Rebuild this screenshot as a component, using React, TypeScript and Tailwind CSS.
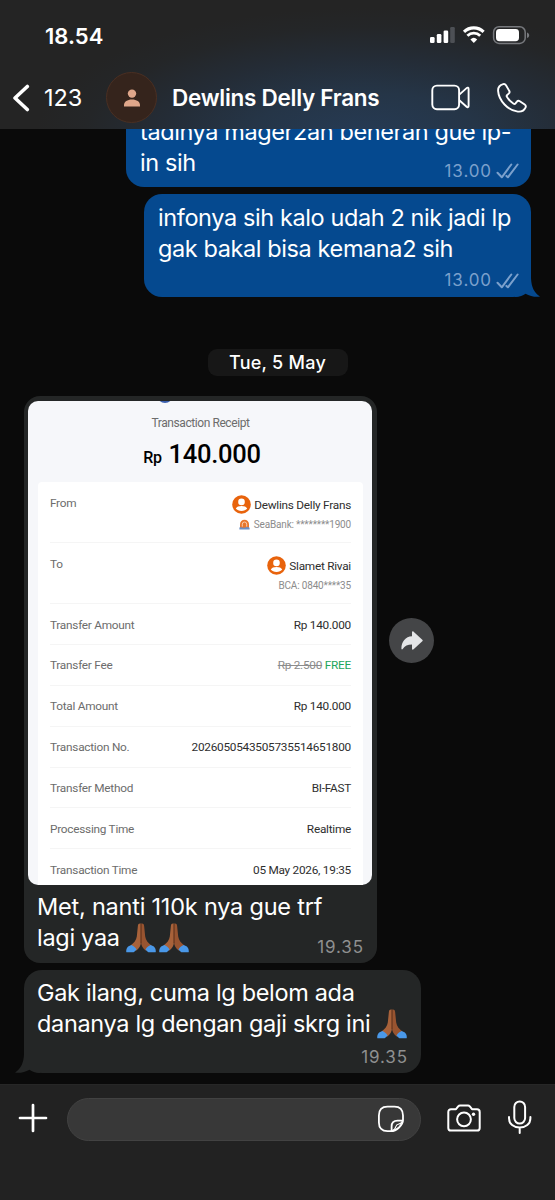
import type { ReactNode } from 'react';

const SANS = "font-['Inter','Liberation_Sans',sans-serif]";

const StatusIcons = () => (
  <svg width="102" height="20" viewBox="0 0 102 20" fill="none">
    <rect x="2" y="12" width="4.6" height="6" rx="1.3" fill="#fff" />
    <rect x="8.8" y="9" width="4.6" height="9" rx="1.3" fill="#fff" />
    <rect x="15.6" y="5.5" width="4.6" height="12.5" rx="1.3" fill="#fff" />
    <rect x="22.2" y="2" width="4.6" height="16" rx="1.3" fill="#4d5055" />
    <path d="M36 6.9a14 14 0 0 1 19.6 0" stroke="#fff" strokeWidth="3.1" />
    <path d="M39.4 10.7a9.2 9.2 0 0 1 12.8 0" stroke="#fff" strokeWidth="2.9" />
    <path d="M45.8 18l-3.4-3.6a5 5 0 0 1 6.8 0z" fill="#fff" />
    <rect x="65.6" y="1.8" width="31.6" height="16.6" rx="5.4" stroke="#77797d" strokeWidth="1.5" />
    <rect x="68" y="4" width="23" height="12.2" rx="3.4" fill="#fff" />
    <path d="M99 7.4c1.6.5 2.2 1.6 2.2 2.8s-.6 2.3-2.2 2.8z" fill="#77797d" />
  </svg>
);

const Header = () => (
  <header className="relative z-10 flex h-[129px] shrink-0 flex-col bg-[#242424] bg-[radial-gradient(ellipse_330px_130px_at_365px_138px,#263b55_0%,#253547_35%,#242c36_62%,#242628_85%,#242424_100%)]">
    <div className="flex h-[67px] items-start justify-between pt-[25px] pr-[25px] pl-[45px]">
      <span className="text-[22px] leading-[22px] font-semibold tracking-[0.05px]">18.54</span>
      <StatusIcons />
    </div>
    <div className="flex h-[62px] items-center pb-px">
      <svg className="ml-[12px]" width="18" height="28" viewBox="0 0 18 28" fill="none">
        <path d="M15.3 2.5L3 14l12.3 11.5" stroke="#fff" strokeWidth="3.6" strokeLinecap="round" strokeLinejoin="round" />
      </svg>
      <span className="ml-[14px] w-[62px] pt-px text-[23.5px] tracking-[-0.1px]">123</span>
      <div className="flex size-[51px] items-center justify-center rounded-full border border-[#4a2f22] bg-[#35241c]">
        <svg width="18" height="18" viewBox="0 0 18 18" fill="#dfa68a">
          <circle cx="9" cy="4.6" r="4.2" />
          <path d="M1 17.6v-1.4c0-3.4 3.4-5.6 8-5.6s8 2.2 8 5.6v1.4z" />
        </svg>
      </div>
      <span className="ml-[15px] w-[259px] pt-px text-[22.5px] font-semibold tracking-[-0.27px] whitespace-nowrap">Dewlins Delly Frans</span>
      <svg width="40" height="27" viewBox="0 0 40 27" fill="none" stroke="#fff" strokeWidth="1.9" strokeLinejoin="round">
        <rect x="1.3" y="1.6" width="26.8" height="23.6" rx="4.6" />
        <path d="M28.3 10.6l7.3-6.5c1-.9 2-.4 2 .8v17c0 1.2-1 1.7-2 .8l-7.3-6.5" />
      </svg>
      <svg className="ml-[25px]" width="32" height="32" viewBox="0 0 32 32" fill="none" stroke="#fff" strokeWidth="1.9" strokeLinejoin="round">
        <path d="M7.2 2.2C4.2 3 1.9 5.4 2.1 8.9c.6 9.6 10 19.7 19.7 20.7 3.7.4 6.6-1.5 7.8-4.2.5-1.2.1-2.2-.9-2.9l-4.9-3.300c-1-.6-2.200-.4-2.900.5l-1.400 1.700c-.5.6-1.200.7-1.900.3-2.800-1.700-5-4-6.700-6.900-.4-.7-.3-1.400.3-1.900l1.500-1.300c.9-.8 1.100-2 .4-3L10 3.200c-.7-1-1.700-1.300-2.800-1z" />
      </svg>
    </div>
  </header>
);

const Ticks = () => (
  <svg width="23" height="16" viewBox="0 0 23 16" fill="none" stroke="#7ba0cc" strokeWidth="2" strokeLinecap="round" strokeLinejoin="round">
    <path d="M1.5 9.8l4.300 4.500L15.300 1.500" />
    <path d="M10.400 12.900l1.500 1.400L21.600 1.500" />
  </svg>
);

const Time = ({ value, sent = false }: { value: string; sent?: boolean }) => (
  <div className={`flex h-5 items-center justify-end gap-1 text-[17px] tracking-[0.9px] ${sent ? 'text-[#7ba0cc]' : 'text-[#8f9090]'}`}>
    <span>{value}</span>
    {sent && <Ticks />}
  </div>
);

const Line = ({ children, className = 'tracking-[-0.4px]' }: { children: ReactNode; className?: string }) => (
  <p className={`h-[31.3px] text-[23.5px] leading-[31.3px] whitespace-nowrap ${className}`}>{children}</p>
);

// folded hands, medium-dark skin tone, blue cuffs
const Pray = () => (
  <svg className="mr-[3px] inline-block align-[-7px]" width="30" height="30" viewBox="0 0 30 30">
    <path d="M14.9.8c-1.500-.8-2.800.2-3 2L10.800 13.500C10.300 17 8 20 4.500 22.500l5.500 5.200c3-2 4.900-5 4.900-8.500z" fill="#a8623a" />
    <path d="M15.100.8c1.500-.8 2.800.2 3 2l1.100 10.700c.5 3.500 2.800 6.500 6.300 9L20 27.700c-3-2-4.900-5-4.900-8.500z" fill="#985430" />
    <path d="M15 1v19" stroke="#5f2f18" strokeWidth=".9" />
    <path d="M5.300 22c2 .6 4.200 2.400 5.200 4.600-.8 1.100-1.700 2-2.900 2.700H.4c-.6-2 .3-4.400 1.700-5.800z" fill="#4a98e8" />
    <path d="M24.700 22c-2 .6-4.200 2.400-5.200 4.600.8 1.100 1.700 2 2.900 2.700h7.200c.6-2-.3-4.400-1.700-5.800z" fill="#4a98e8" />
  </svg>
);

const UserBadge = () => (
  <svg width="19" height="19" viewBox="0 0 19 19">
    <circle cx="9.5" cy="9.5" r="9.3" fill="#e8630c" />
    <circle cx="9.5" cy="6.9" r="3.3" fill="#fff" />
    <path d="M3.8 13.600c.8-1.700 3-2.500 5.700-2.500s4.900.8 5.700 2.500c-1.200 1.600-3.300 2.500-5.700 2.500s-4.500-.9-5.700-2.500z" fill="#fff" />
  </svg>
);

const SeaBankLogo = () => (
  <svg width="11" height="11" viewBox="0 0 11 11">
    <path d="M1 9V5.200a4.500 4.500 0 0 1 9 0V9z" fill="#e8762c" />
    <path d="M3.300 7.600V5.200a2.200 2.200 0 0 1 4.400 0v2.400" fill="none" stroke="#f8d9bf" strokeWidth=".9" />
    <path d="M.4 8.600c1.700-1.300 3.200.6 5 .1 1.700-.5 3.500-1 5.200 0v1.900H.4z" fill="#6b8fc4" />
  </svg>
);

const rows = [
  ['Transfer Amount', 'Rp 140.000'],
  ['Transfer Fee', ''],
  ['Total Amount', 'Rp 140.000'],
  ['Transaction No.', '2026050543505735514651800'],
  ['Transfer Method', 'BI-FAST'],
  ['Processing Time', 'Realtime'],
  ['Transaction Time', '05 May 2026, 19:35'],
];

type PartyProps = { label: string; name: string; account: string; logo?: ReactNode };

const Party = ({ label, name, account, logo }: PartyProps) => (
  <div className="flex h-[61px] justify-between border-b border-[#f5f5f5]">
    <span className="pt-[13px] leading-[16px] text-[#6c6c6c]">{label}</span>
    <div className="flex flex-col items-end pt-[13px]">
      <div className="flex h-[19px] items-center gap-[3px]">
        <UserBadge />
        <span className="pt-0.5">{name}</span>
      </div>
      <div className="mt-[3px] flex h-[14px] items-center gap-1 text-[10px] tracking-[-0.17px] text-[#8c8c8c]">
        {logo}
        <span>{account}</span>
      </div>
    </div>
  </div>
);

const Receipt = () => (
  <div className="relative h-[484px] overflow-hidden rounded-[10px] bg-[#f6f7fa] pr-[9px] pl-[10px] font-['Roboto',sans-serif] text-[11.8px] tracking-[-0.25px] text-[#2e2e2e]">
    <div className="absolute -top-[14px] left-[129px] size-4 rounded-full bg-[#3b5fae]" />
    <h2 className="pt-[14px] text-center text-[12px] leading-[16px] tracking-[-0.42px] text-[#6c6c6c]">Transaction Receipt</h2>
    <div className="flex h-[51px] items-baseline justify-center gap-[7px] pt-[7px] pl-[3px] font-medium text-black">
      <span className="text-[16px] tracking-[-0.4px]">Rp</span>
      <span className="text-[25.5px] leading-[32px] tracking-[-0.25px]">140.000</span>
    </div>
    <div className="h-[410px] rounded-t-[4px] bg-white px-[12px]">
      <Party label="From" name="Dewlins Delly Frans" account="SeaBank: ********1900" logo={<SeaBankLogo />} />
      <Party label="To" name="Slamet Rivai" account="BCA: 0840****35" />
      {rows.map(([label, value]) => (
        <div key={label} className="flex h-[40.9px] items-center justify-between border-b border-[#f5f5f5] pt-[3px]">
          <span className="text-[#6c6c6c]">{label}</span>
          <span>
            {value || (
              <>
                <s className="text-[#8c8c8c]">Rp 2.500</s> <span className="text-[#21a65b]">FREE</span>
              </>
            )}
          </span>
        </div>
      ))}
    </div>
  </div>
);

const Chat = () => (
  <main className="flex h-[955px] shrink-0 flex-col overflow-hidden bg-[#0a0a0a]">
    <div className="-mt-[22px] mr-[24px] h-[80px] w-[405px] shrink-0 self-end rounded-[18px] bg-[#05498f] px-[14px] pt-[9px]">
      <Line>tadinya mager2an beneran gue lp-</Line>
      <div className="flex justify-between">
        <Line>in sih</Line>
        <div className="-mr-[2px] pt-[14px]"><Time value="13.00" sent /></div>
      </div>
    </div>

    <div className="relative mt-[7px] mr-[24px] h-[103px] w-[387px] shrink-0 self-end rounded-[18px] bg-[#05498f] px-[14px] pt-[7.5px]">
      <Line>infonya sih kalo udah 2 nik jadi lp</Line>
      <Line>gak bakal bisa kemana2 sih</Line>
      <div className="-mr-[2px] pt-[7px]"><Time value="13.00" sent /></div>
      <svg className="absolute -right-[9px] bottom-0" width="25" height="24" viewBox="0 0 25 24" fill="#05498f">
        <path d="M9 0h7v5c.4 9 3 14.500 9 18.600-5 .8-10-.5-14.500-2.900C8 22.500 5 24 0 24v-5h9z" />
      </svg>
    </div>

    <div className="mt-[52px] flex h-[27px] w-[140px] shrink-0 items-center justify-center self-center rounded-[9px] bg-[#171717] text-[18px] font-medium tracking-[0.25px]">
      Tue, 5 May
    </div>

    <div className="mt-[20px] ml-[24px] flex shrink-0 items-center gap-[12px]">
      <div className="h-[567px] w-[353px] rounded-[16px] bg-[#242626] pt-[5px] pr-[5px] pl-[4px]">
        <Receipt />
        <div className="pr-[8px] pl-[9px] pt-[6px]">
          <Line className="tracking-[-0.22px]">Met, nanti 110k nya gue trf</Line>
          <div className="flex justify-between">
            <Line className="tracking-[-0.3px]">lagi yaa <Pray /><Pray /></Line>
            <div className="pt-[15px]"><Time value="19.35" /></div>
          </div>
        </div>
      </div>
      <button className="-mt-[79px] flex size-[45px] items-center justify-center rounded-full bg-[#444547]" aria-label="Forward">
        <svg width="22" height="19" viewBox="0 0 22 19" fill="#e4e5e7">
          <path d="M11 1.200v4C4.500 5.600.4 10.500.4 17.600c0 1 .9 1.100 1.300.4 2-3.300 5-4.500 9.300-4.500v4.300c0 .9.900 1.200 1.600.5l8.700-8c.6-.6.6-1 0-1.600L12.600.7C11.900 0 11 .3 11 1.200z" />
        </svg>
      </button>
    </div>

    <div className="relative mt-[7px] ml-[24px] h-[103px] w-[397px] shrink-0 rounded-[18px] bg-[#242626] px-[13px] pt-[7px]">
      <Line className="tracking-[-0.33px]">Gak ilang, cuma lg belom ada</Line>
      <Line className="tracking-[-0.33px]">dananya lg dengan gaji skrg ini <Pray /></Line>
      <div className="pt-[8px]"><Time value="19.35" /></div>
      <svg className="absolute bottom-0 -left-[9px]" width="25" height="24" viewBox="0 0 25 24" fill="#242626">
        <path d="M16 0H9v5c-.4 9-3 14.500-9 18.600 5 .8 10-.5 14.500-2.900C17 22.500 20 24 25 24v-5h-9z" />
      </svg>
    </div>
  </main>
);

const Composer = () => (
  <footer className="flex h-[116px] shrink-0 items-start border-t border-[#272727] bg-[#222222] pt-[13px]">
    <svg className="mt-[5px] ml-[18px]" width="30" height="30" viewBox="0 0 30 30" stroke="#fff" strokeWidth="2.7" strokeLinecap="round">
      <path d="M15 2v26M2 15h26" />
    </svg>
    <div className="ml-[19px] flex h-[43px] w-[354px] items-center justify-end rounded-full border border-[#424242] bg-[#383838] pr-[15px]">
      <svg className="-mt-px" width="28" height="28" viewBox="0 0 28 28" fill="none" stroke="#fff" strokeWidth="1.8" strokeLinejoin="round">
        <path d="M26 15V10.500C26 4.500 23 1.600 17.500 1.600h-7C5 1.600 1.900 4.500 1.900 10.500v7c0 5.600 3.100 8.700 8.600 8.700H14c5.500 0 12-6.200 12-11.200z" />
        <path d="M14.600 26.100v-4.600c0-3.900 2-5.900 6-5.900h5.200" />
        <path d="M14.800 26c2.600-.6 3.300-2.100 3.900-4.200.6-1.900 1.500-2.400 3.200-2.800 2-.5 3.500-1.500 3.900-3.300" strokeWidth="1.1" />
      </svg>
    </div>
    <svg className="mt-[6px] ml-[26px]" width="34" height="28" viewBox="0 0 34 28" fill="none" stroke="#fff" strokeWidth="2" strokeLinejoin="round">
      <path d="M4 5.200h5l2.200-2.800c.5-.6 1-.9 1.800-.9h8c.8 0 1.300.3 1.800.9L25 5.200h5c1.600 0 2.700 1.100 2.700 2.700v16c0 1.600-1.100 2.700-2.700 2.700H4c-1.600 0-2.700-1.100-2.700-2.700v-16c0-1.600 1.100-2.700 2.700-2.700z" />
      <circle cx="17" cy="15.300" r="6.900" />
      <circle cx="26.500" cy="10.300" r="1.700" fill="#fff" stroke="none" />
    </svg>
    <svg className="mt-[2px] ml-[25.5px]" width="25" height="35" viewBox="0 0 25 35" fill="none" stroke="#fff" strokeWidth="2" strokeLinecap="round">
      <rect x="7.300" y="1.500" width="10.800" height="22" rx="5.400" />
      <path d="M2 17v1.200c0 5.800 4.700 9.300 10.700 9.300s10.700-3.500 10.700-9.300V17M12.700 27.500v5.500" />
    </svg>
  </footer>
);

export default function App() {
  return (
    <div className={`flex h-[1200px] w-[555px] flex-col overflow-hidden bg-[#0a0a0a] text-white ${SANS}`}>
      <Header />
      <Chat />
      <Composer />
    </div>
  );
}
